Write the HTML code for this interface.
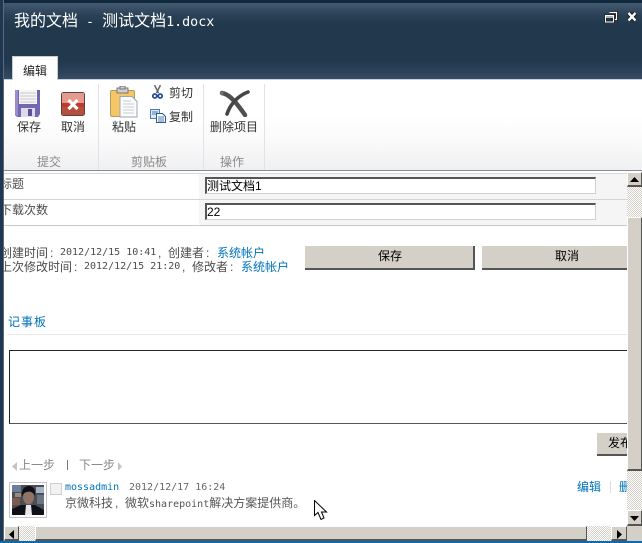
<!DOCTYPE html>
<html><head><meta charset="utf-8">
<style>
html,body{margin:0;padding:0;background:#fff}
#p{position:relative;width:642px;height:543px;overflow:hidden;background:#fff;font-family:"Liberation Sans","WenQuanYi Zen Hei","Noto Sans CJK SC",sans-serif;font-size:12px;color:#4c4c4c}
#p div,#p svg{position:absolute}
.t{white-space:nowrap;line-height:14px}
.m{font-family:"DejaVu Sans Mono","WenQuanYi Zen Hei",monospace;font-size:10px}
.l{color:#0072bc}
.btn{background:#d4d0c8;border-right:2px solid #555;border-bottom:2px solid #555;box-sizing:border-box;color:#000;text-align:center;line-height:21px}
.inp{background:#fff;box-sizing:border-box;border:1px solid #d4d0c8;border-top:2px solid #555;border-left:2px solid #555;color:#000;line-height:14px;padding-left:0}
.sb{background:#d4d0c8;box-sizing:border-box;border:1px solid #fff;border-right-color:#555;border-bottom:2px solid #555}
.ck{background-color:#fff;background-image:repeating-conic-gradient(#d4d0c8 0 25%,#fff 0 50%);background-size:2px 2px}
.rb{color:#333;text-align:center}
</style></head><body>
<div id="p">
<div style="left:0;top:0;width:642px;height:3px;background:#10283c"></div>
<div style="left:3px;top:3px;width:639px;height:76px;background:linear-gradient(#435a70 0,#2a4157 12px,#22384d 22px,#22384d 58px,#2a4157 68px,#364c62 76px)"></div>
<div style="left:0;top:0;width:3px;height:543px;background:#1d3850"></div>
<div style="left:3px;top:0;width:1px;height:541px;background:#5a6a78"></div>
<div class="t" style="left:14px;top:12px;font-size:16px;line-height:18px;color:#fff;font-family:'DejaVu Sans Mono','WenQuanYi Zen Hei',monospace"><span>我的文档</span><span style="font-size:13.33px"> - </span><span>测试文档</span><span style="font-size:13.33px">1.docx</span></div>
<svg style="left:604px;top:11px" width="34" height="12" viewBox="0 0 34 12"><path d="M5.500 1.500h7v7h-2" fill="none" stroke="#111" stroke-width="2.600"/><path d="M5.500 1.500h7v7h-2" fill="none" stroke="#fff" stroke-width="1.200"/><rect x="1.500" y="4.500" width="8" height="6.500" fill="#22384d" stroke="#111" stroke-width="2.400"/><rect x="1.500" y="4.500" width="8" height="6.500" fill="none" stroke="#fff" stroke-width="1.100"/><path d="M2 6h7" stroke="#fff" stroke-width="1.300"/><path d="M24.500 2l7 7.500M31.500 2l-7 7.500" stroke="#111" stroke-width="4.200"/><path d="M24.500 2l7 7.500M31.500 2l-7 7.500" stroke="#fff" stroke-width="2.400"/></svg>

<div style="left:4px;top:79px;width:638px;height:1px;background:#c6d3df"></div>
<div style="left:4px;top:80px;width:638px;height:90px;background:linear-gradient(#fff 0,#fff 36px,#fbfbfb 58px,#eff0f2 90px)"></div>
<div style="left:12px;top:56px;width:46px;height:24px;background:#fff;border:1px solid #c6ccd2;border-bottom:0;box-sizing:border-box"></div>
<div class="t" style="left:23px;top:64px;color:#222">编辑</div>

<div style="left:98px;top:84px;width:1px;height:86px;background:#e2e3e5"></div>
<div style="left:203px;top:84px;width:1px;height:86px;background:#e2e3e5"></div>
<div style="left:264px;top:84px;width:1px;height:86px;background:#e2e3e5"></div>

<svg style="left:14px;top:90px" width="28" height="28" viewBox="0 0 28 28"><path d="M1 0h25v24l-2 3H3l-2-2z" fill="#7566b2"/><path d="M1 0h3v26H3l-2-2z" fill="#9a8ccd"/><rect x="5" y="0" width="18" height="14" fill="#f6f6f6"/><path d="M6 3h16M6 6h16M6 9h16M6 12h16" stroke="#c8c8cc"/><rect x="7" y="18" width="14" height="9" fill="#dcdbe8"/><rect x="14" y="19" width="4" height="7" fill="#5d529a"/></svg>
<svg style="left:61px;top:92px" width="24" height="24" viewBox="0 0 24 24"><rect x=".5" y=".5" width="23" height="23" rx="2" fill="#c0392b" stroke="#5f4040"/><rect x="1" y="1" width="22" height="10" fill="#e49a8e"/><rect x="1" y="15" width="22" height="8" fill="#b5503e"/><path d="M7.500 8l9 9M16.500 8l-9 9" stroke="#fff" stroke-width="3.200"/></svg>
<svg style="left:110px;top:86px" width="30" height="32" viewBox="0 0 30 32"><rect x=".5" y="4.500" width="24" height="26" rx="1.500" fill="#f5c566" stroke="#b59a66"/><rect x="7" y="2" width="11" height="5" fill="#cfcfcf" stroke="#777"/><rect x="10" y="0" width="5" height="3" fill="#ccc" stroke="#777"/><path d="M10 10.500h12l5 5v15.500H10z" fill="#fbfbfb" stroke="#9aa6b4"/><path d="M13 15h8M13 18h11M13 21h11M13 24h11M13 27h11" stroke="#c9ced6"/></svg>
<svg style="left:152px;top:85px" width="11" height="14" viewBox="0 0 11 14"><path d="M2.500 0l4 8M8.500 0l-4 8" stroke="#667" stroke-width="1.500"/><circle cx="2.800" cy="11" r="2" fill="none" stroke="#2a4f9e" stroke-width="1.800"/><circle cx="8.200" cy="11" r="2" fill="none" stroke="#2a4f9e" stroke-width="1.800"/></svg>
<svg style="left:150px;top:109px" width="16" height="14" viewBox="0 0 16 14"><rect x=".5" y=".5" width="9" height="9" fill="#dbe9f8" stroke="#4d7bb5"/><path d="M2 3h6M2 5h6" stroke="#4d7bb5"/><path d="M6.500 4.500h6l3 3v6h-9z" fill="#fff" stroke="#2d5a96"/><path d="M8 8h6M8 10h6M8 12h6" stroke="#4d7bb5"/></svg>
<svg style="left:219px;top:89px" width="31" height="28" viewBox="0 0 31 28"><path d="M3 4C9 5 15 10 26 26" fill="none" stroke="#505050" stroke-width="4.500" stroke-linecap="round"/><path d="M29 3C21 6 12 13 8 25" fill="none" stroke="#454545" stroke-width="3.600" stroke-linecap="round"/><path d="M1 3L5 2 3 7Z" fill="#777"/></svg>

<div class="t rb" style="left:14px;top:120px;width:30px">保存</div>
<div class="t rb" style="left:58px;top:120px;width:30px">取消</div>
<div class="t rb" style="left:109px;top:120px;width:30px">粘贴</div>
<div class="t" style="left:169px;top:86px;color:#333">剪切</div>
<div class="t" style="left:169px;top:110px;color:#333">复制</div>
<div class="t rb" style="left:205px;top:120px;width:58px">删除项目</div>
<div class="t" style="left:37px;top:155px;color:#8a8a8a">提交</div>
<div class="t" style="left:131px;top:155px;color:#8a8a8a">剪贴板</div>
<div class="t" style="left:220px;top:155px;color:#8a8a8a">操作</div>

<div style="left:4px;top:170px;width:638px;height:1px;background:#8c8c8c"></div>
<div style="left:4px;top:171px;width:623px;height:2px;background:#fff"></div>
<div style="left:4px;top:173px;width:623px;height:1px;background:#d8d8d8"></div>
<div style="left:199px;top:174px;width:428px;height:51px;background:#f5f5f5"></div>
<div style="left:4px;top:199px;width:623px;height:1px;background:#d4d4d4"></div>
<div style="left:4px;top:225px;width:623px;height:1px;background:#c8c8c8"></div>
<div class="t" style="left:4px;top:177px;width:30px;overflow:hidden"><span style="margin-left:-4px">标题</span></div>
<div class="t" style="left:4px;top:203px;overflow:hidden;width:60px"><span style="margin-left:-4px">下载次数</span></div>
<div class="inp t" style="left:205px;top:177px;width:391px;height:17px">测试文档1</div>
<div class="inp t" style="left:205px;top:203px;width:391px;height:17px">22</div>

<div class="t" style="left:4px;top:246px;width:46px;overflow:hidden"><span style="margin-left:-4px">创建时间</span></div>
<div class="t" style="left:50px;top:246px">:</div>
<div class="t m" style="left:60px;top:246px">2012/12/15 10:41</div>
<div class="t" style="left:158px;top:246px">,</div>
<div class="t" style="left:168px;top:246px">创建者</div>
<div class="t" style="left:206px;top:246px">:</div>
<div class="t l" style="left:217px;top:246px">系统帐户</div>

<div class="t" style="left:4px;top:260px;width:70px;overflow:hidden"><span style="margin-left:-4px">上次修改时间</span></div>
<div class="t" style="left:74px;top:260px">:</div>
<div class="t m" style="left:84px;top:260px">2012/12/15 21:20</div>
<div class="t" style="left:182px;top:260px">,</div>
<div class="t" style="left:192px;top:260px">修改者</div>
<div class="t" style="left:230px;top:260px">:</div>
<div class="t l" style="left:241px;top:260px">系统帐户</div>

<div class="btn t" style="left:305px;top:246px;width:170px;height:24px;padding-left:2px">保存</div>
<div class="btn t" style="left:482px;top:246px;width:172px;height:24px">取消</div>

<div class="t l" style="left:8px;top:315px;letter-spacing:1px">记事板</div>
<div style="left:7px;top:334px;width:620px;height:1px;background:#e8e8e8"></div>
<div style="left:9px;top:350px;width:618px;height:74px;box-sizing:border-box;border:1px solid #222;border-right:0;border-bottom-color:#555"></div>
<div class="btn t" style="left:597px;top:433px;width:30px;height:23px;border-right:0;line-height:20px;text-align:left;padding-left:11px;overflow:hidden">发布</div>

<svg style="left:11px;top:462px" width="112" height="9" viewBox="0 0 112 9"><path d="M6 0v9L1 4.500z" fill="#c4c4c4"/><path d="M107 0v9l4-4.500z" fill="#c4c4c4"/></svg>
<div class="t" style="left:19px;top:458px;color:#888">上一步</div>
<div style="left:67px;top:460px;width:1px;height:10px;background:#777"></div>
<div class="t" style="left:79px;top:458px;color:#888">下一步</div>

<div style="left:9px;top:482px;width:38px;height:36px;box-sizing:border-box;border:1px solid #c4c4c4;background:#fff"></div>
<svg style="left:12px;top:485px" width="32" height="30" viewBox="0 0 32 30"><rect width="32" height="30" fill="#4a4e56"/><rect x="0" y="0" width="9" height="7" fill="#6b7f9c"/><rect x="3" y="8" width="6" height="4" fill="#9a8a80"/><rect x="24" y="2" width="8" height="6" fill="#a5b3c4"/><rect x="0" y="13" width="8" height="7" fill="#7d5a50"/><rect x="25" y="10" width="7" height="9" fill="#6c7682"/><path d="M0 30V24L9 20H23L32 25V30Z" fill="#101116"/><path d="M14 20h5l1 10h-7z" fill="#e8e8ea"/><ellipse cx="16.500" cy="12" rx="5.500" ry="7.500" fill="#8f7366"/><path d="M10 12C9 4 13 1 17 1S24 4 23 11C21 7 18 6 15 7 13 7 11 9 10 12Z" fill="#101014"/></svg>
<div style="left:50px;top:483px;width:12px;height:12px;box-sizing:border-box;border:1px solid #cfcfcf;background:#f2f2f2"></div>
<div class="t l m" style="left:65px;top:481px">mossadmin</div>
<div class="t m" style="left:129px;top:481px;color:#666">2012/12/17 16:24</div>
<div class="t" style="left:65px;top:496px;color:#555">京微科技</div>
<div class="t" style="left:115px;top:496px;color:#555">,</div>
<div class="t" style="left:125px;top:496px;color:#555">微软<span class="m">sharepoint</span>解决方案提供商。</div>
<div class="t l" style="left:577px;top:480px">编辑</div>
<div style="left:610px;top:481px;width:1px;height:12px;background:#ddd"></div>
<div class="t l" style="left:619px;top:480px;width:8px;overflow:hidden">删除</div>
<svg style="left:314px;top:500px" width="16" height="22" viewBox="0 0 16 22"><path d="M.5.500V15.500L4 12.500 7 19.500 10 18 7.500 12H12.500Z" fill="#fff" stroke="#000"/></svg>

<div class="ck" style="left:627px;top:172px;width:15px;height:354px"></div>
<div class="sb" style="left:627px;top:172px;width:15px;height:15px"></div>
<svg style="left:630px;top:177px" width="9" height="5" viewBox="0 0 9 5"><path d="M4.500 0L9 5H0z"/></svg>
<div class="sb" style="left:627px;top:217px;width:15px;height:254px"></div>
<div class="sb" style="left:627px;top:510px;width:15px;height:16px"></div>
<svg style="left:630px;top:516px" width="9" height="5" viewBox="0 0 9 5"><path d="M0 0H9L4.500 5z"/></svg>
<div class="ck" style="left:4px;top:526px;width:623px;height:15px"></div>
<div class="sb" style="left:4px;top:526px;width:15px;height:15px"></div>
<svg style="left:9px;top:530px" width="5" height="9" viewBox="0 0 5 9"><path d="M5 0V9L0 4.500z"/></svg>
<div class="sb" style="left:35px;top:526px;width:552px;height:15px"></div>
<div class="sb" style="left:611px;top:526px;width:16px;height:15px"></div>
<svg style="left:617px;top:530px" width="5" height="9" viewBox="0 0 5 9"><path d="M0 0V9L5 4.500z"/></svg>
<div style="left:627px;top:526px;width:15px;height:15px;background:#d4d0c8"></div>
<div style="left:0;top:541px;width:642px;height:2px;background:#0a6cb0"></div>
</div>
</body></html>
